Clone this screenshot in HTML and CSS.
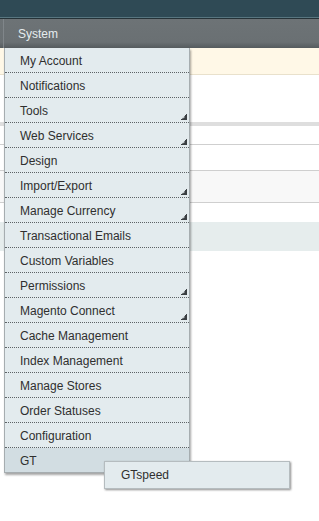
FILE: index.html
```html
<!DOCTYPE html>
<html lang="en">
<head>
  <meta charset="UTF-8">
  <title>System menu</title>
  <link rel="stylesheet" href="styles.css">
</head>
<body>
  <div class="topbar"></div>
  <nav class="navbar">
    <div class="nav-item">System</div>
  </nav>

  <!-- page content behind the dropdown -->
  <div class="content">
    <div class="row message"></div>
    <div class="row gap-46"></div>
    <div class="row band"></div>
    <div class="row gap-18"></div>
    <div class="row gap-25 lined"></div>
    <div class="row grey"></div>
    <div class="row gap-20 lined"></div>
    <div class="row tinted"></div>
  </div>

  <ul class="dropdown">
    <li>My Account</li>
    <li>Notifications</li>
    <li class="parent">Tools</li>
    <li class="parent">Web Services</li>
    <li>Design</li>
    <li class="parent">Import/Export</li>
    <li class="parent">Manage Currency</li>
    <li>Transactional Emails</li>
    <li>Custom Variables</li>
    <li class="parent">Permissions</li>
    <li class="parent">Magento Connect</li>
    <li>Cache Management</li>
    <li>Index Management</li>
    <li>Manage Stores</li>
    <li>Order Statuses</li>
    <li>Configuration</li>
    <li class="active">GT</li>
  </ul>

  <ul class="submenu">
    <li>GTspeed</li>
  </ul>
</body>
</html>
```

FILE: styles.css
```css
body {
  margin: 0;
  font-family: "Liberation Sans", Arial, sans-serif;
  font-size: 12px;
  color: #2f2f2f;
  background: #fff;
  position: relative;
  height: 521px;
  overflow: hidden;
}

/* header */
.topbar {
  height: 17px;
  background: #2f4a55;
  border-bottom: 1px solid #587680;
}
.navbar {
  height: 29px;
  border-top: 1px solid #263338;
  background: linear-gradient(#6d7376 0%, #6a7073 80%, #555b5e 100%);
  display: flex;
}
.nav-item {
  margin-left: 3px;
  padding: 0 0 0 14px;
  width: 170px;
  border-left: 1px solid #80868a;
  color: #e6ecee;
  line-height: 30px;
  font-size: 12px;
}

/* background page rows */
.message {
  height: 26px;
  background: #fff8e7;
  border-bottom: 1px solid #e9e1cc;
}
.gap-46 { height: 47px; }
.band { height: 4px; background: #dedede; }
.gap-18 { height: 18px; border-bottom: 1px solid #cfcfcf; }
.gap-25 { height: 25px; }
.lined { border-bottom: 1px solid #cfcfcf; }
.grey { height: 31px; background: #f8f8f8; border-bottom: 1px solid #cfcfcf; }
.gap-20 { height: 19px; border-bottom: none; }
.tinted { height: 29px; background: #e6eded; }

/* dropdown menu */
.dropdown {
  position: absolute;
  left: 4px;
  top: 48px;
  width: 184px;
  margin: 0;
  padding: 0;
  list-style: none;
  background: #e3ebee;
  border: 1px solid #a6adb0;
  border-top: none;
  box-shadow: 1px 2px 2px rgba(0,0,0,0.35);
}
.dropdown li {
  height: 24px;
  line-height: 26px;
  padding-left: 15px;
  border-bottom: 1px dotted #5d6366;
  position: relative;
}
.dropdown li.parent::after {
  content: "";
  position: absolute;
  right: 2px;
  bottom: 2px;
  width: 7px;
  height: 6px;
  background: linear-gradient(135deg, transparent 50%, #3a3f42 50%);
}
.dropdown li.parent::before {
  content: "";
  position: absolute;
  right: 4px;
  bottom: 4px;
  width: 3px;
  height: 1px;
  background: #c7cfd2;
  transform: rotate(-40deg);
  z-index: 1;
}
.dropdown li.active {
  background: #d2dde2;
  border-bottom: none;
  height: 24px;
}

.submenu {
  position: absolute;
  left: 104px;
  top: 461px;
  width: 184px;
  margin: 0;
  padding: 0;
  list-style: none;
  background: #e3ebee;
  border: 1px solid #b5bcbf;
  box-shadow: 1px 1px 2px rgba(0,0,0,0.45);
}
.submenu li {
  height: 26px;
  line-height: 27px;
  padding-left: 16px;
}
```
